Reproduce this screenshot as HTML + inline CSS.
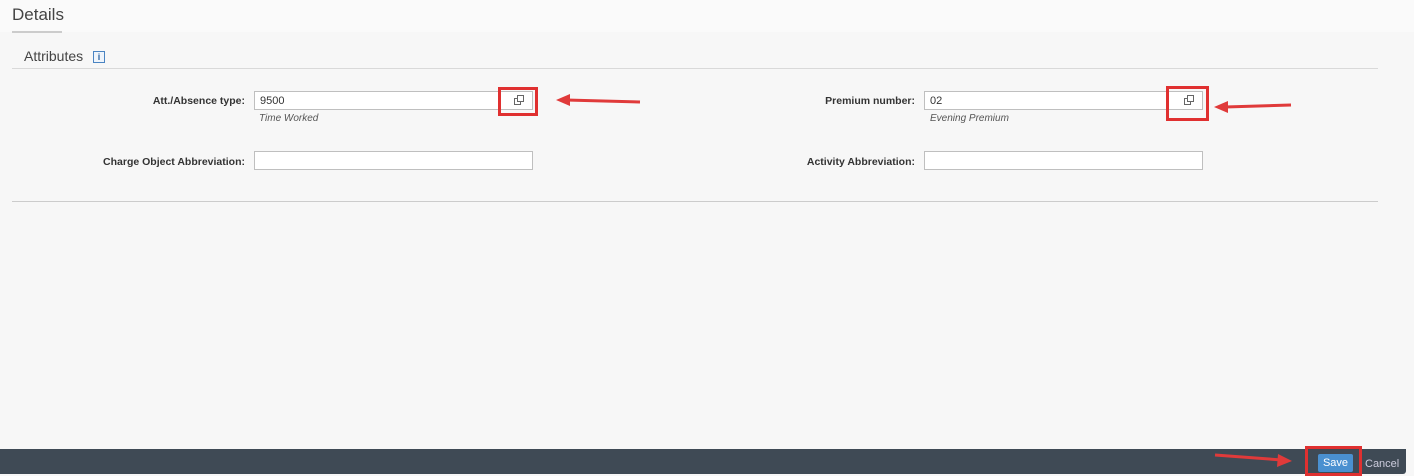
<!DOCTYPE html>
<html><head><style>
body{margin:0;width:1414px;height:476px;background:#f7f7f7;font-family:"Liberation Sans",sans-serif;position:relative;overflow:hidden}
.a{position:absolute}
.lbl{font-size:10.5px;font-weight:bold;color:#333;text-align:right;width:240px}
.inp{background:#fff;border:1px solid #bfbfbf;height:19px;box-sizing:border-box;font-size:11px;color:#333;padding:3px 5px}
.sub{font-size:10px;font-style:italic;color:#555}
.box{border:3px solid #e03030;box-sizing:border-box}
</style></head><body>
<div class="a" style="left:0;top:0;width:1414px;height:32px;background:#fafafa"></div>
<div class="a" style="left:12px;top:5px;font-size:17px;color:#444">Details</div>
<div class="a" style="left:12px;top:31px;width:50px;height:2px;background:#ccc"></div>
<div class="a" style="left:24px;top:48px;font-size:14px;color:#444">Attributes</div>
<div class="a" style="left:93px;top:51px;width:10px;height:10px;border:1px solid #4a84c2;font-size:9px;color:#2a64a2;text-align:center;line-height:10px;font-weight:bold;background:#eef4fb">i</div>
<div class="a" style="left:12px;top:68px;width:1366px;height:1px;background:#d9d9d9"></div>

<div class="a lbl" style="left:5px;top:95px">Att./Absence type:</div>
<div class="a inp" style="left:254px;top:91px;width:279px">9500</div>
<div class="a sub" style="left:259px;top:113px">Time Worked</div>
<div class="a box" style="left:498px;top:87px;width:40px;height:29px"></div>
<svg class="a" style="left:513px;top:95px" width="12" height="11"><rect x="1.5" y="3.5" width="6" height="6" fill="none" stroke="#666"/><rect x="4.5" y="0.5" width="6" height="6" fill="#fff" stroke="#666"/></svg>

<div class="a lbl" style="left:675px;top:95px">Premium number:</div>
<div class="a inp" style="left:924px;top:91px;width:279px">02</div>
<div class="a sub" style="left:930px;top:113px">Evening Premium</div>
<div class="a box" style="left:1166px;top:86px;width:43px;height:35px"></div>
<svg class="a" style="left:1183px;top:95px" width="12" height="11"><rect x="1.5" y="3.5" width="6" height="6" fill="none" stroke="#666"/><rect x="4.5" y="0.5" width="6" height="6" fill="#fff" stroke="#666"/></svg>

<div class="a lbl" style="left:5px;top:156px">Charge Object Abbreviation:</div>
<div class="a inp" style="left:254px;top:151px;width:279px"></div>
<div class="a lbl" style="left:675px;top:156px">Activity Abbreviation:</div>
<div class="a inp" style="left:924px;top:151px;width:279px"></div>

<div class="a" style="left:12px;top:201px;width:1366px;height:1px;background:#ccc"></div>

<svg class="a" style="left:0;top:0" width="1414" height="476">
<g stroke="#e03a3a" stroke-width="3" fill="#e03a3a">
<line x1="640" y1="102" x2="566" y2="100"/><polygon points="556,100 570,94 570,106" stroke="none"/>
<line x1="1291" y1="105" x2="1225" y2="107"/><polygon points="1214,107 1228,101 1228,113" stroke="none"/>
</g></svg>

<div class="a" style="left:0;top:449px;width:1406px;height:25px;background:#3f4a55;border-radius:0 0 3px 0"></div>
<svg class="a" style="left:0;top:0" width="1414" height="476"><g fill="#e03a3a" stroke="#e03a3a" stroke-width="3">
<line x1="1215" y1="455" x2="1282" y2="460"/><polygon points="1292,461 1278,454 1277,467" stroke="none"/></g></svg>
<div class="a" style="left:1318px;top:454px;width:35px;height:18px;background:#4a90d0;color:#fff;font-size:11px;text-align:center;line-height:18px;border-radius:2px">Save</div>
<div class="a box" style="left:1305px;top:446px;width:57px;height:30px"></div>
<div class="a" style="left:1365px;top:458px;color:#ccd;font-size:11px">Cancel</div>
</body></html>
